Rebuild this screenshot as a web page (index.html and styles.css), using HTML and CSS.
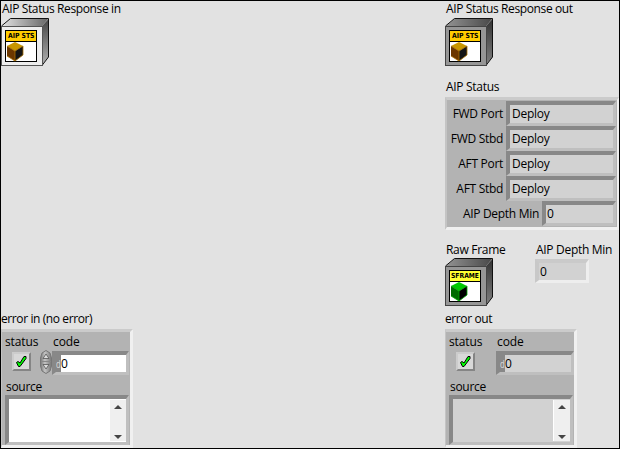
FILE: index.html
```html
<!DOCTYPE html>
<html lang="en">
<head>
<meta charset="utf-8">
<title>AIP Status Response</title>
<link rel="stylesheet" href="styles.css">
</head>
<body>
<svg class="defs" width="0" height="0" aria-hidden="true">
  <defs>
    <linearGradient id="top" x1="0" x2="1"><stop offset="0" stop-color="#e0e0e0"/><stop offset="1" stop-color="#666"/></linearGradient>
    <linearGradient id="side" x1="0" y1="0" x2="0" y2="1"><stop offset="0" stop-color="#454545"/><stop offset="1" stop-color="#b0b0b0"/></linearGradient>
    <linearGradient id="topDark" x1="0" x2="1"><stop offset="0" stop-color="#929292"/><stop offset="1" stop-color="#484848"/></linearGradient>
    <linearGradient id="sideDark" x1="0" y1="0" x2="0" y2="1"><stop offset="0" stop-color="#333"/><stop offset="1" stop-color="#808080"/></linearGradient>
    <linearGradient id="knob" x1="0" x2="1"><stop offset="0" stop-color="#777"/><stop offset=".4" stop-color="#c4c4c4"/><stop offset="1" stop-color="#777"/></linearGradient>
    <g id="check"><path d="M4.500 10.500 L6 9.500 L8 11 L12 4.500 H14 V6.500 L8 14.500 H6.500Z" fill="#0f0" stroke="#000" stroke-width="1"/></g>
  </defs>
</svg>
<main class="panel">
  <section class="col left">
    <div class="label first">AIP Status Response in</div>
    <svg class="object" width="48" height="48" viewBox="0 0 48 48">
      <path d="M1 8 L10 .5 H47.5 L41 8Z" fill="url(#top)"/><path d="M41 8 L47.5 1 V39 L41 47Z" fill="url(#side)"/>
      <path d="M.5 8 L9.5 .5 H47.5 V39 L41 47.5" fill="none" stroke="#111"/>
      <rect x=".5" y="8.5" width="41" height="39" fill="#ededed" stroke="#555"/>
      <rect x="4.500" y="12.500" width="31" height="31" fill="#fff" stroke="#000"/><path d="M5 13h30v10H5z" fill="#fc0"/><path d="M5 23.500h30" stroke="#000"/>
      <text class="tag" x="7" y="20" textLength="26.500" lengthAdjust="spacingAndGlyphs">AIP STS</text>
      <path d="M6 28 L14 24 L22 28 L14 33Z" fill="#c89600"/><path d="M6 28 L14 33 V43 L6 38Z" fill="#6b3700"/><path d="M14 33 L22 28 V37 L14 43Z" fill="#151515"/><path d="M6 28 L14 33 L22 28M14 33V43M6 38L14 43L22 37V28" fill="none" stroke="#a87000" stroke-width=".8"/>
    </svg>
    <div class="label error-title">error in (no error)</div>
    <div class="cluster error error-in">
      <div class="controls">
        <div class="status"><div class="label s-label">status</div><div class="checkbox"><svg width="19" height="19"><use href="#check"/></svg></div></div>
        <div class="spinner"><svg width="12" height="24" viewBox="0 0 12 24"><path d="M6 .5 L10 3 L11.500 8 V16 L10 21 L6 23.500 L2 21 L.5 16 V8 L2 3Z" fill="url(#knob)" stroke="#777"/><path d="M3 8.500 L6 4 L9 8.500ZM3 14.500H9L6 19Z" fill="#ddd" stroke="#555" stroke-width=".8"/><path d="M1 11.500h10" stroke="#888"/></svg></div>
        <div class="code"><div class="label c-label">code</div><div class="field number"><span class="radix"><span class="radix-mark">d</span></span><span>0</span></div></div>
      </div>
      <div class="label source-label">source</div>
      <div class="field source"><div class="scroll"><svg width="16" height="40"><path d="M4 9L8 5L12 9ZM4 35H12L8 39Z" fill="#444"/></svg></div></div>
    </div>
  </section>
  <section class="col right">
    <div class="label first">AIP Status Response out</div>
    <svg class="object" width="48" height="48" viewBox="0 0 48 48">
      <path d="M1 8 L10 .5 H47.5 L41 8Z" fill="url(#topDark)"/><path d="M41 8 L47.5 1 V39 L41 47Z" fill="url(#sideDark)"/>
      <path d="M.5 8 L9.500 .5 H47.5 V39 L41 47.5" fill="none" stroke="#111"/>
      <rect x=".5" y="8.500" width="41" height="39" fill="#969696" stroke="#444"/>
      <rect x="4.500" y="12.500" width="31" height="31" fill="#fff" stroke="#000"/><path d="M5 13h30v10H5z" fill="#fc0"/><path d="M5 23.500h30" stroke="#000"/>
      <text class="tag" x="7" y="20" textLength="26.500" lengthAdjust="spacingAndGlyphs">AIP STS</text>
      <path d="M6 28 L14 24 L22 28 L14 33Z" fill="#c89600"/><path d="M6 28 L14 33 V43 L6 38Z" fill="#6b3700"/><path d="M14 33 L22 28 V37 L14 43Z" fill="#151515"/><path d="M6 28 L14 33 L22 28M14 33V43M6 38L14 43L22 37V28" fill="none" stroke="#a87000" stroke-width=".8"/>
    </svg>
    <div class="label status-title">AIP Status</div>
    <div class="cluster ports">
      <div class="row"><span class="label">FWD Port</span><div class="field">Deploy</div></div>
      <div class="row"><span class="label">FWD Stbd</span><div class="field">Deploy</div></div>
      <div class="row"><span class="label">AFT Port</span><div class="field">Deploy</div></div>
      <div class="row"><span class="label">AFT Stbd</span><div class="field">Deploy</div></div>
      <div class="row"><span class="label">AIP Depth Min</span><div class="field short">0</div></div>
    </div>
    <div class="outputs">
      <div class="frame"><div class="label">Raw Frame</div>
        <svg class="object" width="48" height="48" viewBox="0 0 48 48">
          <path d="M1 8 L10 .5 H47.5 L41 8Z" fill="url(#topDark)"/><path d="M41 8 L47.5 1 V39 L41 47Z" fill="url(#sideDark)"/>
          <path d="M.5 8 L9.500 .5 H47.5 V39 L41 47.5" fill="none" stroke="#111"/>
          <rect x=".5" y="8.500" width="41" height="39" fill="#969696" stroke="#444"/>
          <rect x="4.500" y="12.500" width="31" height="31" fill="#fff" stroke="#000"/><path d="M5 13h30v10H5z" fill="#ffff32"/><path d="M5 23.500h30" stroke="#000"/>
          <text class="tag" x="6" y="20" textLength="28" lengthAdjust="spacingAndGlyphs">SFRAME</text>
          <path d="M6 28 L14 24 L22 28 L14 33Z" fill="#00c800"/><path d="M6 28 L14 33 V43 L6 38Z" fill="#006a00"/><path d="M14 33 L22 28 V37 L14 43Z" fill="#000"/><path d="M6 28 L14 33 L22 28M14 33V43M6 38L14 43L22 37V28" fill="none" stroke="#00a800" stroke-width=".8"/>
        </svg>
      </div>
      <div class="depth"><div class="label">AIP Depth Min</div><div class="field raised">0</div></div>
    </div>
    <div class="label error-title">error out</div>
    <div class="cluster error error-out">
      <div class="controls">
        <div class="status"><div class="label s-label">status</div><div class="checkbox"><svg width="19" height="19"><use href="#check"/></svg></div></div>
        <div class="spinner"></div>
        <div class="code"><div class="label c-label">code</div><div class="field number"><span class="radix"><span class="radix-mark">d</span></span><span>0</span></div></div>
      </div>
      <div class="label source-label">source</div>
      <div class="field source"><div class="scroll"><svg width="16" height="40"><path d="M4 9L8 5L12 9ZM4 35H12L8 39Z" fill="#444"/></svg></div></div>
    </div>
  </section>
</main>
</body>
</html>
```
FILE: styles.css
```css
* { box-sizing: border-box; }
body { margin: 0; font: 12px/16px "Open Sans", sans-serif; color: #000; }
svg { display: block; }
.defs { position: absolute; }
.panel { width: 620px; height: 449px; border: 1px solid #000; background: #e2e2e2; display: flex; overflow: hidden; }
.col { display: flex; flex-direction: column; align-items: flex-start; flex: none; }
.left { width: 444px; }
.right { width: 174px; }
.label { height: 16px; white-space: nowrap; padding-left: 1px; letter-spacing: -.3px; }
.first { margin-bottom: 1px; letter-spacing: -.38px; }
.object { flex: none; }
.tag { font: bold 7px "DejaVu Sans", sans-serif; }
.cluster { background: #b3b3b3; border: 3px solid; border-color: #cbcbcb #f0f0f0 #f0f0f0 #c4c4c4; }
.field { background: #d2d2d2; border: 4px solid; border-color: #888 #bfbfbf #bfbfbf #888; border-right-width: 3px; border-bottom-width: 3px; height: 25px; line-height: 18px; padding-left: 1px; letter-spacing: -.25px; white-space: nowrap; }
.status-title { margin-top: 13px; margin-bottom: 2px; }
.ports { width: 174px; height: 133px; padding: 1px 1px 0 0; border-left-width: 2px; border-right-width: 2px; }
.row { height: 25px; display: flex; justify-content: flex-end; align-items: center; gap: 3px; }
.row .field { width: 110px; flex: none; padding-left: 2px; }
.row .short { width: 74px; padding-left: 1px; }
.outputs { display: flex; margin-top: 12px; height: 65px; }
.frame { width: 90px; }
.depth { width: 84px; }
.raised { width: 54px; height: 24px; margin-top: 1px; border-color: #cacaca #eee #eee #c8c8c8; }
.left .error-title { margin-top: 245px; }
.right .error-title { margin-top: 4px; }
.error-title { margin-bottom: 2px; padding-left: 0; letter-spacing: -.4px; }
.error { width: 132px; height: 119px; border-left-width: 1px; padding-left: 3px; }
.controls { display: flex; height: 47px; padding-top: 2px; }
.status { width: 35px; }
.s-label { padding-left: 0; letter-spacing: -.1px; }
.checkbox { width: 19px; height: 19px; margin: 2px 0 0 7px; background: #d8d8d8; border: 2px solid; border-color: #ccc #858585 #858585 #ccc; }
.checkbox svg { margin: -2px; }
.spinner { width: 12px; padding-top: 16px; }
.code { width: 78px; }
.c-label { letter-spacing: -.1px; }
.number { width: 77px; margin-top: 1px; height: 24px; padding-left: 0; display: flex; line-height: 17px; }
.error-in .field { background: #fff; }
.error-out .number { width: 78px; }
.radix { width: 5px; flex: none; background: #888; color: #ddd; }
.radix-mark { display: block; width: 7px; font-size: 11px; letter-spacing: 0; transform: scaleX(.7); transform-origin: left; }
.source-label { padding-left: 1px; }
.source { width: 124px; height: 50px; display: flex; justify-content: flex-end; }
.scroll { width: 17px; height: 41px; margin-top: 1px; background: #efefef; border-left: 1px solid #fff; }
```
